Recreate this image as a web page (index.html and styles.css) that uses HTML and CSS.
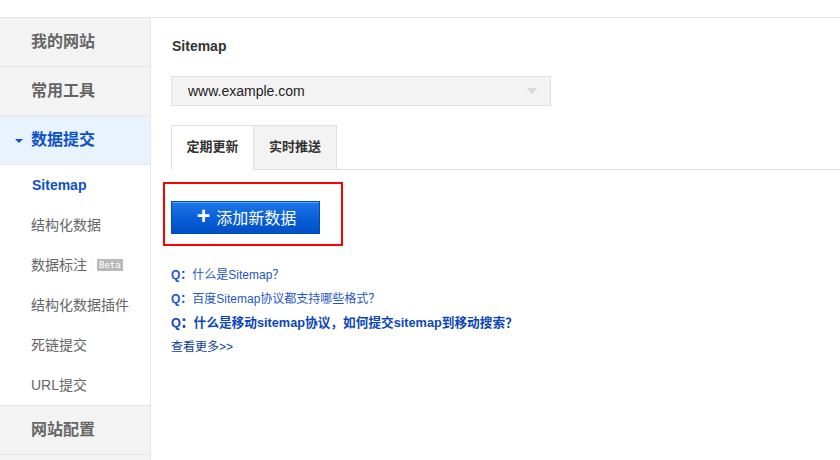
FILE: index.html
```html
<!DOCTYPE html>
<html lang="zh-CN">
<head>
<meta charset="utf-8">
<title>Sitemap</title>
<link rel="stylesheet" href="styles.css">
</head>
<body>
<div class="topbar"></div>
<div class="layout">
  <aside class="sidebar">
    <div class="nav-head">我的网站</div>
    <div class="nav-head">常用工具</div>
    <div class="nav-head active"><span class="caret"></span>数据提交</div>
    <ul class="subnav">
      <li class="current">Sitemap</li>
      <li>结构化数据</li>
      <li>数据标注<span class="beta">Beta</span></li>
      <li>结构化数据插件</li>
      <li>死链提交</li>
      <li>URL提交</li>
    </ul>
    <div class="nav-head">网站配置</div>
  </aside>
  <main class="main">
    <h2 class="title">Sitemap</h2>
    <div class="select">
      <span>www.example.com</span>
      <span class="sel-arrow"></span>
    </div>
    <div class="tabs">
      <div class="tab on">定期更新</div>
      <div class="tab">实时推送</div>
    </div>
    <div class="highlight">
      <button class="btn"><span class="plus">+</span>添加新数据</button>
    </div>
    <ul class="faq">
      <li><b>Q：</b>什么是Sitemap？</li>
      <li><b>Q：</b>百度Sitemap协议都支持哪些格式？</li>
      <li class="strong"><b>Q：</b>什么是移动sitemap协议，如何提交sitemap到移动搜索？</li>
      <li class="more">查看更多&gt;&gt;</li>
    </ul>
  </main>
</div>
</body>
</html>
```
FILE: styles.css
```css
* { box-sizing: border-box; }
html, body { margin: 0; padding: 0; background: #fff; }
body {
  font-family: "Liberation Sans", Arial, "Noto Sans CJK SC", sans-serif;
  width: 840px;
  height: 460px;
  overflow: hidden;
}
.topbar {
  height: 18px;
  border-bottom: 1px solid #e6e6e6;
}
.layout {
  display: flex;
  height: 442px;
}
.sidebar {
  width: 151px;
  flex: none;
  background: #f3f3f3;
  border-right: 1px solid #e6e6e6;
}
.nav-head {
  height: 49px;
  line-height: 48px;
  border-bottom: 1px solid #e6e6e6;
  padding-left: 31px;
  font-size: 16px;
  font-weight: bold;
  color: #666;
  position: relative;
}
.nav-head.active {
  background: #e9f3fd;
  color: #0b52c8;
}
.caret {
  position: absolute;
  left: 15px;
  top: 23px;
  width: 0;
  height: 0;
  border-left: 4px solid transparent;
  border-right: 4px solid transparent;
  border-top: 4px solid #0b52c8;
}
.subnav {
  list-style: none;
  margin: 0;
  padding: 0;
  background: #fff;
  border-bottom: 1px solid #e6e6e6;
}
.subnav li {
  height: 40px;
  line-height: 40px;
  padding-left: 31px;
  font-size: 14px;
  color: #666;
  display: flex;
  align-items: center;
}
.subnav li.current {
  color: #0b52c8;
  font-weight: bold;
  font-size: 14px;
  padding-left: 32px;
}
.beta {
  display: inline-block;
  margin-left: 10px;
  background: #b9b9b9;
  color: #fff;
  font-family: "DejaVu Sans Mono", monospace;
  font-size: 9px;
  line-height: 12px;
  height: 12px;
  padding: 0 2px;
}
.main {
  flex: 1;
  padding: 18px 0 0 20px;
}
.title {
  margin: 0 0 20px 1px;
  font-size: 14px;
  line-height: 20px;
  font-weight: bold;
  color: #333;
}
.select {
  width: 380px;
  height: 30px;
  background: #f3f3f3;
  border: 1px solid #e0e0e0;
  display: flex;
  align-items: center;
  justify-content: space-between;
  padding: 0 13px 0 16px;
  font-size: 14px;
  color: #222;
}
.sel-arrow {
  width: 0;
  height: 0;
  border-left: 5px solid transparent;
  border-right: 5px solid transparent;
  border-top: 6px solid #d9d9d9;
}
.tabs {
  margin-top: 19px;
  display: flex;
  border-bottom: 1px solid #e0e0e0;
}
.tab {
  width: 83px;
  height: 44px;
  line-height: 42px;
  text-align: center;
  font-size: 13px;
  font-weight: bold;
  color: #333;
  background: #f3f3f3;
  border: 1px solid #e0e0e0;
  border-bottom: none;
  margin-bottom: -1px;
}
.tab.on {
  background: #fff;
  height: 45px;
}
.tab + .tab { border-left: none; }
.highlight {
  margin: 12px 0 0 -8px;
  width: 180px;
  height: 64px;
  border: 2px solid #f00;
  padding: 17px 0 0 6px;
}
.btn {
  width: 149px;
  height: 33px;
  border: 1px solid #0049b8;
  background: linear-gradient(#1b79e9, #0a5fd8 50%, #0050c6);
  box-shadow: inset 0 1px 0 #5ea4f0;
  color: #fff;
  font-family: "Noto Sans CJK SC", sans-serif;
  font-size: 16px;
  line-height: 31px;
  padding: 0 0 0 2px;
  display: flex;
  align-items: center;
  justify-content: center;
}
.plus {
  font-family: "Liberation Sans", Arial, sans-serif;
  font-weight: bold;
  font-size: 23px;
  margin-right: 6px;
  margin-top: -3px;
}
.faq {
  list-style: none;
  margin: 17px 0 0;
  padding: 0;
  font-size: 12px;
  line-height: 24px;
  color: #1f55c8;
}
.faq li.strong { font-weight: bold; color: #0b46b8; font-size: 12.7px; }
.faq li.more { color: #0d3f9e; }
```
